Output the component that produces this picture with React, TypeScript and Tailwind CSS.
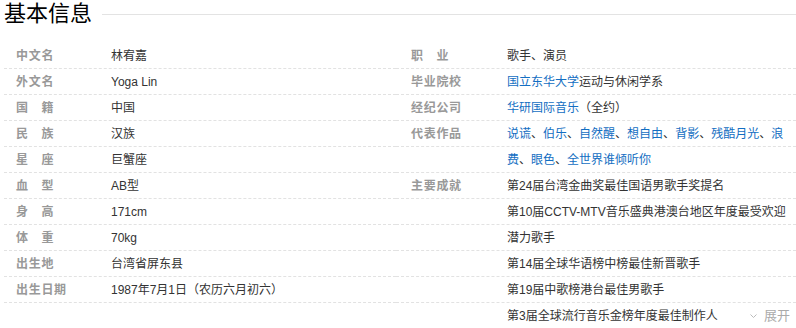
import type { ReactNode } from 'react';

type Row = { label: string; value: ReactNode };

const A = ({ children }: { children: ReactNode }) => <span className="text-[#136ec2]">{children}</span>;

const left: Row[] = [
  { label: '中文名', value: '林宥嘉' },
  { label: '外文名', value: 'Yoga Lin' },
  { label: '国　籍', value: '中国' },
  { label: '民　族', value: '汉族' },
  { label: '星　座', value: '巨蟹座' },
  { label: '血　型', value: 'AB型' },
  { label: '身　高', value: '171cm' },
  { label: '体　重', value: '70kg' },
  { label: '出生地', value: '台湾省屏东县' },
  { label: '出生日期', value: '1987年7月1日（农历六月初六）' },
];

const right: Row[] = [
  { label: '职　业', value: '歌手、演员' },
  { label: '毕业院校', value: <><A>国立东华大学</A>运动与休闲学系</> },
  { label: '经纪公司', value: <><A>华研国际音乐</A>（全约）</> },
  {
    label: '代表作品',
    value: <><A>说谎</A>、<A>伯乐</A>、<A>自然醒</A>、<A>想自由</A>、<A>背影</A>、<A>残酷月光</A>、<A>浪</A></>,
  },
  { label: '', value: <><A>费</A>、<A>眼色</A>、<A>全世界谁倾听你</A></> },
  { label: '主要成就', value: '第24届台湾金曲奖最佳国语男歌手奖提名' },
  { label: '', value: '第10届CCTV-MTV音乐盛典港澳台地区年度最受欢迎' },
  { label: '', value: '潜力歌手' },
  { label: '', value: '第14届全球华语榜中榜最佳新晋歌手' },
  { label: '', value: '第19届中歌榜港台最佳男歌手' },
  { label: '', value: '第3届全球流行音乐金榜年度最佳制作人' },
];

function InfoRow({ row, last, pad, labelW }: { row: Row; last?: boolean; pad: string; labelW: string }) {
  return (
    <div className={'flex h-[26px] items-center ' + pad + (last ? '' : ' border-b border-dashed border-[#e2e2e2]')}>
      <span className={'shrink-0 font-bold tracking-[0.7px] text-[#999] ' + labelW}>{row.label}</span>
      <span className="whitespace-nowrap text-[#333]">{row.value}</span>
    </div>
  );
}

export default function App() {
  return (
    <div
      className="w-[796px] h-[328px] overflow-hidden bg-white text-[12px] leading-[26px]"
      style={{ fontFamily: '"Liberation Sans", "Noto Sans CJK SC", sans-serif' }}
    >
      <div className="flex h-[30px] items-start pl-[4px]">
        <h2 className="text-[22px] leading-[28px] text-black">基本信息</h2>
        <div className="ml-[10px] mt-[14px] h-px flex-1 bg-[#e3e3e3]" />
      </div>
      <div className="mt-[13px] flex pl-[4px]">
        <div className="w-[392px]">
          {left.map((r) => (
            <InfoRow key={r.label} row={r} pad="pl-[12px]" labelW="w-[95px]" />
          ))}
        </div>
        <div className="w-[400px]">
          {right.map((r, i) => (
            <div key={i} className="relative">
              <InfoRow row={r} last={i === right.length - 1} pad="pl-[15px]" labelW="w-[96px]" />
              {i === right.length - 1 && (
                <span className="absolute right-[6px] top-0 flex items-center gap-[7px] text-[13px] text-[#aaa]">
                  <svg width="7" height="5" viewBox="0 0 7 5" fill="none" stroke="#bbb" strokeWidth="1">
                    <path d="M0.5 0.5l3 3 3-3" />
                  </svg>
                  展开
                </span>
              )}
            </div>
          ))}
        </div>
      </div>
    </div>
  );
}
